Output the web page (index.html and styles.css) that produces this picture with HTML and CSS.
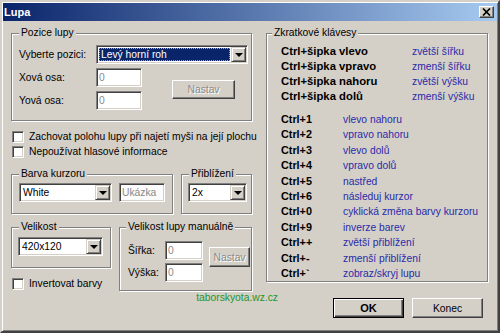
FILE: index.html
```html
<!DOCTYPE html>
<html lang="cs">
<head>
<meta charset="utf-8">
<title>Lupa</title>
<link rel="stylesheet" href="styles.css">
</head>
<body>
<div class="window">
  <div class="titlebar">
    <span class="title">Lupa</span>
    <span class="close"><svg width="9" height="8" viewBox="0 0 9 8"><path d="M1 0.5 L8 7.5 M8 0.5 L1 7.5" stroke="#000" stroke-width="1.7" fill="none"/></svg></span>
  </div>
  <div class="content">
    <div class="left">
      <fieldset class="group pozice">
        <legend>Pozice lupy</legend>
        <div class="pozice-grid">
          <span class="lbl">Vyberte pozici:</span>
          <div class="combo combo-pos"><span class="combo-val sel">Levý horní roh</span><span class="drop"></span></div>
          <span class="lbl">Xová osa:</span>
          <span class="edit">0</span>
          <button class="btn disabled nastav-pos">Nastav</button>
          <span class="lbl">Yová osa:</span>
          <span class="edit">0</span>
        </div>
      </fieldset>

      <div class="checks">
        <label class="check"><span class="box"></span>Zachovat polohu lupy při najetí myši na její plochu</label>
        <label class="check"><span class="box"></span>Nepoužívat hlasové informace</label>
      </div>

      <div class="row row-color">
        <fieldset class="group barva">
          <legend>Barva kurzoru</legend>
          <div class="inline">
            <div class="combo combo-color"><span class="combo-val">White</span><span class="drop"></span></div>
            <span class="edit sample">Ukázka</span>
          </div>
        </fieldset>
        <fieldset class="group zoom">
          <legend>Přiblížení</legend>
          <div class="combo"><span class="combo-val">2x</span><span class="drop"></span></div>
        </fieldset>
      </div>

      <div class="row row-size">
        <div class="size-col">
          <fieldset class="group velikost">
            <legend>Velikost</legend>
            <div class="combo"><span class="combo-val">420x120</span><span class="drop"></span></div>
          </fieldset>
          <label class="check invert"><span class="box"></span>Invertovat barvy</label>
        </div>
        <fieldset class="group manual">
          <legend>Velikost lupy manuálně</legend>
          <div class="manual-grid">
            <span class="lbl">Šířka:</span>
            <span class="edit">0</span>
            <button class="btn disabled nastav-man">Nastav</button>
            <span class="lbl">Výška:</span>
            <span class="edit">0</span>
          </div>
        </fieldset>
      </div>
    </div>

    <fieldset class="group keys-box">
      <legend>Zkratkové klávesy</legend>
      <div class="keys keys-top">
        <b>Ctrl+šipka vlevo</b><span>zvětší šířku</span>
        <b>Ctrl+šipka vpravo</b><span>zmenší šířku</span>
        <b>Ctrl+šipka nahoru</b><span>zvětší výšku</span>
        <b>Ctrl+šipka dolů</b><span>zmenší výšku</span>
      </div>
      <div class="keys keys-num">
        <b>Ctrl+1</b><span>vlevo nahoru</span>
        <b>Ctrl+2</b><span>vpravo nahoru</span>
        <b>Ctrl+3</b><span>vlevo dolů</span>
        <b>Ctrl+4</b><span>vpravo dolů</span>
        <b>Ctrl+5</b><span>nastřed</span>
        <b>Ctrl+6</b><span>následuj kurzor</span>
        <b>Ctrl+0</b><span>cyklická změna barvy kurzoru</span>
        <b>Ctrl+9</b><span>inverze barev</span>
        <b>Ctrl++</b><span>zvětší přiblížení</span>
        <b>Ctrl+-</b><span>zmenší přiblížení</span>
        <b>Ctrl+`</b><span>zobraz/skryj lupu</span>
      </div>
    </fieldset>

    <div class="footer">
      <span class="web">taborskyota.wz.cz</span>
      <button class="btn btn-ok">OK</button>
      <button class="btn btn-konec">Konec</button>
    </div>
  </div>
</div>
</body>
</html>
```

FILE: styles.css
```css
* { box-sizing: border-box; }
html, body { margin: 0; padding: 0; }
body {
  width: 500px;
  height: 333px;
  overflow: hidden;
  background: #d4d0c8;
  font-family: "Liberation Sans", Arial, sans-serif;
  font-size: 10.3px;
  color: #000;
}

.window {
  width: 500px;
  height: 333px;
  background: #d4d0c8;
  border: 2px solid;
  border-color: #d4d0c8 #404040 #404040 #d4d0c8;
  box-shadow: inset 1px 1px 0 #fff, inset -1px -1px 0 #808080;
  padding: 1px;
  display: flex;
  flex-direction: column;
}

.titlebar {
  flex: none;
  height: 18px;
  background: linear-gradient(to right, #0a246a, #a6caf0);
  display: flex;
  align-items: center;
  justify-content: space-between;
  padding: 0 3px 0 1px;
}
.title {
  color: #fff;
  font-weight: bold;
  font-size: 11px;
  line-height: 12px;
}
.close {
  width: 15px;
  height: 12px;
  background: #d4d0c8;
  border: 1px solid;
  border-color: #fff #404040 #404040 #fff;
  box-shadow: inset -1px -1px 0 #808080;
  display: flex;
  align-items: center;
  justify-content: center;
}
.close svg { display: block; }

.content {
  flex: 1;
  display: grid;
  grid-template-columns: 241px 222px;
  grid-template-rows: auto 1fr;
  column-gap: 14px;
  align-items: start;
  padding: 6px 0 0 8px;
}

/* group boxes */
.group {
  margin: 0;
  min-width: 0;
  border: 1px solid #808080;
  box-shadow: inset 1px 1px 0 #fff, 1px 1px 0 #fff;
}
.group legend {
  padding: 0 2px;
  line-height: 12px;
  background: #d4d0c8;
}

.lbl { line-height: 19px; white-space: nowrap; }

/* combo box */
.combo {
  height: 19px;
  display: flex;
  background: #fff;
  border: 1px solid;
  border-color: #808080 #fff #fff #808080;
  box-shadow: inset 1px 1px 0 #404040, inset -1px -1px 0 #d4d0c8;
  padding: 1px;
}
.combo-val {
  flex: 1;
  min-width: 0;
  line-height: 15px;
  padding-left: 2px;
  white-space: nowrap;
  overflow: hidden;
}
.combo-val.sel {
  background: #0a246a;
  color: #fff;
  margin: 1px 1px 1px 1px;
  line-height: 13px;
  outline: 1px dotted #9aa0c8;
  outline-offset: -1px;
}
.drop {
  flex: none;
  width: 15px;
  background: #d4d0c8;
  border: 1px solid;
  border-color: #d4d0c8 #404040 #404040 #d4d0c8;
  box-shadow: inset 1px 1px 0 #fff, inset -1px -1px 0 #808080;
  display: flex;
  align-items: center;
  justify-content: center;
}
.drop::after {
  content: "";
  border-left: 4px solid transparent;
  border-right: 4px solid transparent;
  border-top: 4px solid #000;
  margin-top: 1px;
}

/* edit */
.edit {
  display: block;
  height: 19px;
  background: #fff;
  border: 1px solid;
  border-color: #808080 #fff #fff #808080;
  box-shadow: inset 1px 1px 0 #404040, inset -1px -1px 0 #d4d0c8;
  padding: 1px 2px;
  line-height: 15px;
  color: #8a8a8a;
  white-space: nowrap;
}

/* buttons */
.btn {
  font: inherit;
  height: 20px;
  padding: 0;
  background: #d4d0c8;
  color: #000;
  border: 1px solid;
  border-color: #fff #404040 #404040 #fff;
  box-shadow: inset -1px -1px 0 #808080;
}
.btn.disabled {
  color: #8a8a8a;
  text-shadow: 1px 1px 0 #fff;
}

/* checkboxes */
.check {
  display: flex;
  align-items: center;
  height: 15px;
  white-space: nowrap;
}
.box {
  flex: none;
  width: 12px;
  height: 12px;
  margin: 0 5px 0 1px;
  background: #fff;
  border: 1px solid;
  border-color: #808080 #fff #fff #808080;
  box-shadow: inset 1px 1px 0 #404040, inset -1px -1px 0 #d4d0c8;
}

/* left column */
.left { display: flex; flex-direction: column; }

.pozice { padding: 6px 2px 10px 7px; }
.pozice-grid {
  display: grid;
  grid-template-columns: 77px 46px 1fr;
  grid-template-rows: 19px 19px 19px;
  row-gap: 4px;
}
.combo-pos { grid-column: 2 / 4; width: 152px; }
.nastav-pos {
  grid-column: 3;
  grid-row: 2 / 4;
  align-self: center;
  justify-self: start;
  width: 63px;
  height: 19px;
  margin-left: 30px;
}

.checks { margin-top: 8px; }

.row { display: flex; gap: 8px; }
.row-color { margin-top: 9px; }
.barva { width: 162px; padding: 3px 6px 11px 7px; }
.zoom { flex: 1; padding: 3px 4px 11px 6px; }
.zoom legend { margin-left: 1px; }
.inline { display: flex; gap: 7px; }
.combo-color { width: 93px; }
.sample { width: 46px; background: #fbfbfb; }

.row-size { margin-top: 7px; }
.size-col { width: 100px; flex: none; }
.velikost { padding: 4px 7px 11px 6px; }
.velikost legend { margin-left: 1px; }
.invert { margin-top: 8px; }

.manual { flex: 1; padding: 8px 0 8px 8px; }
.manual legend { margin-left: -2px; }
.manual-grid {
  display: grid;
  grid-template-columns: 37px 38px auto;
  grid-template-rows: 19px 19px;
  row-gap: 3px;
}
.nastav-man {
  grid-column: 3;
  grid-row: 1 / 3;
  align-self: start;
  width: 41px;
  height: 20px;
  margin: 6px 0 0 6px;
}

/* shortcuts */
.keys-box { padding: 5px 4px 0 14px; align-self: start; }
.keys-box legend { margin-left: -9px; }
.keys { display: grid; white-space: nowrap; }
.keys span { color: #2a2aa8; }
.keys-top { grid-template-columns: 131px auto; line-height: 15px; }
.keys-top b { font-size: 11.3px; }
.keys-num { grid-template-columns: 62px auto; line-height: 15.4px; margin-top: 8px; }
.keys-num b { font-size: 10.8px; }

/* footer */
.footer {
  grid-column: 1 / -1;
  display: flex;
  justify-content: flex-end;
  align-items: flex-start;
  padding-right: 5px;
}
.web {
  color: #22962a;
  line-height: 12px;
  margin: 1px 55px 0 0;
}
.btn-ok, .btn-konec { width: 71px; height: 20px; margin-top: 7px; }
.btn-ok {
  font-weight: bold;
  font-size: 11px;
  border: 1px solid #000;
  box-shadow: inset 1px 1px 0 #fff, inset -1px -1px 0 #404040, inset -2px -2px 0 #808080;
}
.btn-konec { margin-left: 8px; }
```
